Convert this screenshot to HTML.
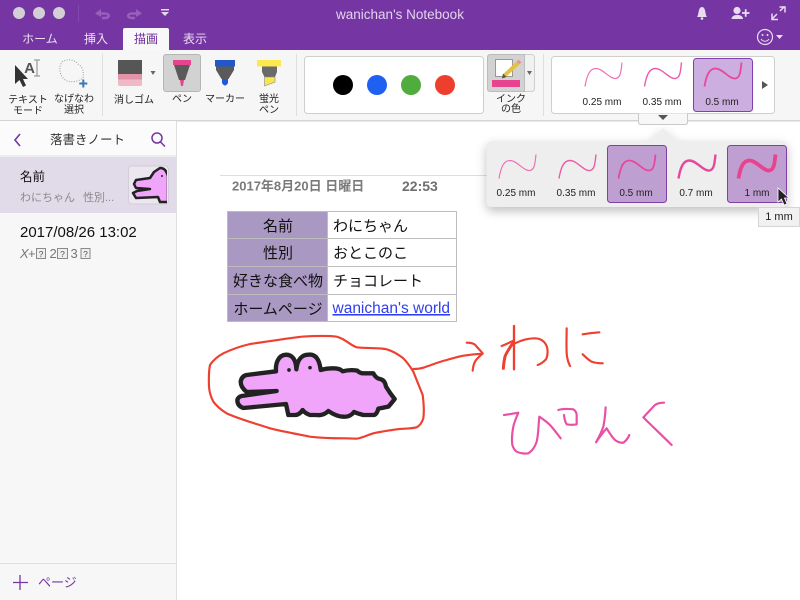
<!DOCTYPE html>
<html lang="ja">
<head>
<meta charset="utf-8">
<title>wanichan's Notebook</title>
<style>
html,body{margin:0;padding:0;width:800px;height:600px;overflow:hidden;background:#fff}
svg{display:block;position:absolute;left:0;top:0}
text{font-family:"Liberation Sans","Noto Sans CJK JP",sans-serif}
.c{text-anchor:middle}
.l{font-size:10px;fill:#222;text-anchor:middle}
.mm{font-size:10px;fill:#222;text-anchor:middle}
.tab{font-size:12px;fill:#eadff2;text-anchor:middle}
.cell{font-size:15px;fill:#111}
.ink{fill:none;stroke-linecap:round;stroke-linejoin:round}
</style>
</head>
<body>
<svg width="800" height="600" viewBox="0 0 800 600" xmlns="http://www.w3.org/2000/svg">
<defs>
<clipPath id="thumb"><rect x="128" y="166" width="39" height="38"/></clipPath>
<filter id="sh" x="-10%" y="-20%" width="120%" height="160%"><feDropShadow dx="0" dy="4" stdDeviation="5" flood-color="#000" flood-opacity=".25"/></filter>
<path id="cv" d="M0 24C2 12 5 6 11 6C18 6 25 17 31 16C36 15 36 8 37 0"/>
</defs>

<!-- Title bar -->
<rect width="800" height="50" fill="#7535a2"/>
<circle cx="19" cy="13" r="6" fill="#d2d0d4"/><circle cx="39" cy="13" r="6" fill="#d2d0d4"/><circle cx="59" cy="13" r="6" fill="#d2d0d4"/>
<rect x="78" y="5" width="1" height="17" fill="#8449ad"/>
<path d="M99 13.500H105C110 13.500 110 18 105 18H102" fill="none" stroke="#955fbb" stroke-width="2.600"/><path d="M95 13.500L101 9V17Z" fill="#955fbb"/>
<path d="M138 13.500H132C127 13.500 127 18 132 18H135" fill="none" stroke="#955fbb" stroke-width="2.600"/><path d="M142 13.500L136 9V17Z" fill="#955fbb"/>
<rect x="161" y="9" width="8" height="1.500" fill="#e5d9ee"/><path d="M161 12H169L165 16Z" fill="#e5d9ee"/>
<text x="400" y="19" class="c" font-size="13.500" fill="#e3d4ee">wanichan's Notebook</text>
<!-- right icons -->
<path d="M697 17C699 15 698 7 702 7C706 7 705 15 707 17Z" fill="#e8dcf0"/><circle cx="702" cy="18.500" r="1.300" fill="#e8dcf0"/>
<circle cx="737" cy="10.500" r="3.600" fill="#e8dcf0"/><path d="M731.500 19C731.500 13.500 743 13.500 743 19Z" fill="#e8dcf0"/><path d="M742 13H749.500M745.700 9.300V16.700" stroke="#e8dcf0" stroke-width="1.800" fill="none"/>
<path d="M772.500 18.500L777 14M780 11L784.500 6.500M779.500 7H785V12.500M772 13.500V19.500H778" stroke="#e8dcf0" stroke-width="1.500" fill="none"/>
<circle cx="765" cy="37" r="7.500" fill="none" stroke="#e8dcf0" stroke-width="1.200"/><circle cx="762.500" cy="35" r="1" fill="#e8dcf0"/><circle cx="767.500" cy="35" r="1" fill="#e8dcf0"/><path d="M761 39C763 42 767 42 769 39" fill="none" stroke="#e8dcf0"/>
<path d="M776 35H783L779.500 39Z" fill="#e8dcf0"/>
<!-- Tabs -->
<path d="M123 50V30Q123 28 125 28H167Q169 28 169 30V50Z" fill="#f8f8f8"/>
<text x="40" y="43" class="tab">ホーム</text>
<text x="96" y="43" class="tab">挿入</text>
<text x="146" y="43" class="c" font-size="12" fill="#6d2c99">描画</text>
<text x="195" y="43" class="tab">表示</text>

<!-- Ribbon -->
<rect y="50" width="800" height="70" fill="#f6f6f6"/>
<rect y="120" width="800" height="1.500" fill="#d4d4d4"/>
<rect x="102" y="54" width="1" height="62" fill="#dfdfdf"/>
<rect x="296" y="54" width="1" height="62" fill="#dfdfdf"/>
<rect x="543" y="54" width="1" height="62" fill="#dfdfdf"/>

<!-- text mode -->
<path d="M15 65V84L19.500 80L23 87L26 85.500L23 79H28Z" fill="#333"/>
<text x="29.500" y="73" class="c" font-size="15" font-weight="bold" fill="#555">A</text>
<path d="M34 60H40M34 76H40M37 60V76" stroke="#888" fill="none"/>
<text x="28" y="103" class="l">テキスト</text><text x="28" y="114" class="l">モード</text>
<!-- lasso -->
<path d="M62 62C68 58 75 60 78 64C83 67 84 72 83 78C78 82 68 84 63 78C59 73 59 66 62 62Z" fill="none" stroke="#9a9a9a" stroke-dasharray="1 1.500"/>
<path d="M83.300 79.500V87.500M79.300 83.500H87.300" stroke="#3b78b8" stroke-width="2" fill="none"/>
<text x="74" y="102" class="l">なげなわ</text><text x="74" y="113" class="l">選択</text>
<!-- eraser -->
<rect x="118" y="60" width="24" height="14" fill="#565656"/><rect x="118" y="74" width="24" height="5.500" fill="#e393a8"/><path d="M118 79.500H142V84Q142 86 140 86H120Q118 86 118 84Z" fill="#f1b9c7"/>
<path d="M150.500 71H155.500L153 75Z" fill="#666"/>
<text x="134" y="103" class="l">消しゴム</text>
<!-- pen -->
<rect x="163.500" y="54.500" width="37" height="37" rx="2.500" fill="#d2d2d2" stroke="#b5b5b5"/>
<rect x="173" y="60" width="18" height="5" fill="#e8438f"/><path d="M174 65H190L185 80H179Z" fill="#5a5a5a"/><path d="M180 80H184L183 86H181Z" fill="#e8438f"/>
<text x="182" y="102" class="l">ペン</text>
<!-- marker -->
<rect x="215" y="60" width="20" height="6.500" fill="#2257c9"/><path d="M216 66.500H234V70L228.500 79H221.500L216 70Z" fill="#5a5a5a"/><path d="M222 79H228V83Q225 88 222 83Z" fill="#2257e0"/>
<text x="225" y="102" class="l">マーカー</text>
<!-- highlighter -->
<rect x="257" y="60" width="24" height="6.500" fill="#fbe94f"/><path d="M262 66.500H277V72L275 77H264.500L262 72Z" fill="#6a6a6a"/><path d="M264.500 77H275V82L264.500 86Z" fill="#f8e64a" stroke="#888" stroke-width=".6"/>
<text x="269" y="102" class="l">蛍光</text><text x="269" y="113" class="l">ペン</text>

<!-- palette -->
<rect x="304.500" y="56.500" width="179" height="57" rx="3" fill="#fff" stroke="#cfcfcf"/>
<circle cx="343" cy="85" r="10" fill="#000"/><circle cx="377" cy="85" r="10" fill="#1f60f3"/><circle cx="411" cy="85" r="10" fill="#50ac3c"/><circle cx="445" cy="85" r="10" fill="#ee3e2e"/>
<!-- ink colour -->
<rect x="487.500" y="54.500" width="47" height="37" rx="3" fill="#f1f1f1" stroke="#cecece"/>
<path d="M524.500 54.500H490.500Q487.500 54.500 487.500 57.500V88.500Q487.500 91.500 490.500 91.500H524.500Z" fill="#d2d2d2" stroke="#bcbcbc"/>
<rect x="495.500" y="59.500" width="17" height="17" fill="#fff" stroke="#999"/>
<path d="M504 76L518 63" stroke="#e5c13f" stroke-width="4" fill="none"/><path d="M518 63L520 61" stroke="#e78ea5" stroke-width="4" fill="none"/><path d="M502 78.500L503 73.500L506.500 77Z" fill="#555"/>
<rect x="492" y="80" width="28" height="7" fill="#e8438f"/>
<path d="M527 71H532L529.500 75Z" fill="#666"/>
<text x="511" y="102" class="l">インク</text><text x="511" y="112" class="l">の色</text>

<!-- top gallery -->
<rect x="551.500" y="56.500" width="223" height="57" rx="3" fill="#fff" stroke="#cfcfcf"/>
<rect x="693.500" y="58.500" width="59" height="53" rx="3" fill="#cdaee0" stroke="#8340ac"/>
<use href="#cv" x="585" y="62.500" fill="none" stroke="#ed72b5" stroke-width="1.200"/>
<use href="#cv" x="644.500" y="62.500" fill="none" stroke="#ea5ca8" stroke-width="1.400"/>
<use href="#cv" x="704.500" y="62.500" fill="none" stroke="#e8489c" stroke-width="1.800"/>
<text x="602" y="105" class="mm">0.25 mm</text><text x="662" y="105" class="mm">0.35 mm</text><text x="722" y="105" class="mm">0.5 mm</text>
<path d="M762 81L768 85L762 89Z" fill="#555"/>
<path d="M638.500 113.500V122Q638.500 124.500 641 124.500H685Q687.500 124.500 687.500 122V113.500" fill="#f7f7f7" stroke="#c9c9c9"/>
<path d="M658 115H668L663 120Z" fill="#555"/>

<!-- Sidebar -->
<rect y="121" width="176" height="479" fill="#f7f7f7"/>
<rect y="121" width="176" height="36" fill="#fbfbfb"/>
<rect x="176" y="121" width="1" height="479" fill="#dedede"/>
<rect y="155" width="176" height="2" fill="#ececec"/>
<rect y="157" width="176" height="56" fill="#e1dbe9"/>
<path d="M20 134L15 140L20 146" fill="none" stroke="#7535a2" stroke-width="1.600"/>
<text x="87.500" y="144" class="c" font-size="12.500" fill="#333">落書きノート</text>
<circle cx="157" cy="138" r="5" fill="none" stroke="#7535a2" stroke-width="1.500"/><path d="M160.500 142L165 146.500" stroke="#7535a2" stroke-width="1.500"/>
<text x="20" y="181" font-size="12.500" fill="#111">名前</text>
<text x="20" y="201" font-size="11" fill="#8a8a8a">わにちゃん</text><text x="83" y="201" font-size="11" fill="#8a8a8a">性別...</text>
<rect x="128.500" y="166" width="40" height="38" rx="3" fill="#ebe6ef" stroke="#d2cdd6"/>
<g clip-path="url(#thumb)">
<path d="M136 180L150 178L154 172L160 168C164 168 166 170 168 176V202H160L158 197L136 198L133 193L137 191L150 189L136 188L134 184Z" fill="#f0a4fa" stroke="#222" stroke-width="2.500" stroke-linejoin="round"/>
<circle cx="162" cy="176" r="1" fill="#222"/>
</g>
<text x="20" y="237" font-size="15" fill="#111">2017/08/26 13:02</text>
<text x="20" y="258" font-size="13" font-style="italic" fill="#777">X</text><text x="28" y="258" font-size="13" fill="#777">+</text>
<rect x="36.500" y="248.500" width="9" height="10" fill="#eee" stroke="#8a8a8a"/><text x="41" y="257" class="c" font-size="8.500" fill="#555">?</text>
<text x="49.500" y="258" font-size="13" fill="#777">2</text>
<rect x="57.500" y="248.500" width="10" height="10" fill="#eee" stroke="#8a8a8a"/><text x="62.500" y="257" class="c" font-size="8.500" fill="#555">?</text>
<text x="70.500" y="258" font-size="13" fill="#777">3</text>
<rect x="81" y="248.500" width="9" height="10" fill="#eee" stroke="#8a8a8a"/><text x="85.500" y="257" class="c" font-size="8.500" fill="#555">?</text>
<rect y="563" width="176" height="1" fill="#dedede"/>
<path d="M20 575V590M13 582.500H28" stroke="#7535a2" stroke-width="1.300"/>
<text x="38" y="587" font-size="13" fill="#7535a2">ページ</text>

<!-- Note header -->
<rect x="220" y="175" width="280" height="1" fill="#dddddd"/>
<text x="232" y="190.500" font-size="13" font-weight="bold" fill="#7a7a7a">2017年8月20日 日曜日</text>
<text x="402" y="191" font-size="14" font-weight="bold" fill="#6e6e6e">22:53</text>

<!-- Table -->
<rect x="227.500" y="211.500" width="229" height="110" fill="#fff" stroke="#bdbdbd"/>
<rect x="228" y="212" width="99" height="109" fill="#a998c2"/>
<path d="M227 238.500H457M227 266.500H457M227 294.500H457M327.500 211V322" stroke="#bdbdbd" fill="none"/>
<text x="278" y="231" class="c cell">名前</text>
<text x="278" y="258" class="c cell">性別</text>
<text x="278" y="286" class="c cell">好きな食べ物</text>
<text x="278" y="314" class="c cell">ホームページ</text>
<text x="333" y="231" class="cell">わにちゃん</text>
<text x="333" y="258" class="cell">おとこのこ</text>
<text x="333" y="286" class="cell">チョコレート</text>
<text x="332.500" y="313" font-size="15.500" fill="#2f3ff0" text-decoration="underline">wanichan's world</text>

<!-- Drawing: circle & croc -->
<g transform="translate(200 330) scale(.33333)">
<path class="ink" stroke="#ee4030" stroke-width="6.500" d="M305 20C340 18 380 16 410 20C435 26 450 45 470 52C505 56 535 52 560 58C585 65 600 78 610 85C625 100 632 112 640 125C650 150 660 175 668 195C672 225 672 250 670 265C665 280 658 288 650 292C630 297 610 295 590 298C565 302 540 305 520 310C500 316 485 324 470 326L435 325C400 325 365 324 330 320C290 312 250 305 210 295C165 280 120 268 80 250C60 238 50 228 40 215C32 200 28 185 27 170C26 145 26 125 30 105C40 90 55 78 70 70C95 58 125 48 150 42C200 35 255 26 305 20Z"/>
<path fill="#f0a4fa" stroke="#222" stroke-width="13" stroke-linejoin="round" d="M228 124C226 100 235 75 258 74C278 74 288 90 289 118C292 90 305 74 325 74C345 72 358 85 362 120Q380 115 400 115Q420 115 428 124Q450 118 472 122Q480 130 490 130L520 130Q528 145 540 147Q555 150 558 170Q570 190 584 207Q570 225 565 230L535 236Q530 255 520 255L490 255Q470 250 462 246Q450 262 430 260Q410 260 385 243Q370 258 350 255L330 255Q315 250 308 240Q298 255 285 255L265 255L258 222L130 234Q112 228 112 210Q115 200 125 198L230 183L140 186Q122 172 122 155Q125 138 140 135Z"/>
<circle cx="267" cy="120" r="5.500" fill="#222"/><circle cx="330" cy="113" r="5.500" fill="#222"/>
</g>
<g transform="translate(410 320) scale(.33333)">
<g class="ink" stroke="#ee4030">
<path stroke-width="6.500" d="M10 147C20 147 30 146 40 143C65 135 85 126 110 120C130 114 150 109 160 107C180 104 200 102 218 101M170 68C180 68 190 70 195 74L218 100C208 110 198 118 195 125C191 132 189 142 188 152"/>
<path stroke-width="7" d="M312 18V148"/>
<path stroke-width="6.500" d="M275 78C290 72 300 67 310 62"/>
<path stroke-width="9" d="M308 70C296 88 288 100 285 110C282 122 281 133 280 145"/>
<path stroke-width="6.500" d="M315 70C335 60 355 55 375 55C395 55 408 68 412 85C414 100 412 110 408 118C400 126 392 132 383 135"/>
<path stroke-width="6.500" d="M470 25C470 55 468 85 471 110C473 122 476 130 480 138M518 43C535 40 550 38 568 37M518 103C528 112 535 120 545 125C555 129 566 130 578 130"/>
</g>
<g class="ink" stroke="#e94fa5" stroke-width="6.500">
<path d="M282 285C298 283 312 280 325 278C318 295 312 308 310 320C306 340 305 360 307 375C310 385 315 392 320 395C330 400 345 402 355 400C368 392 375 380 380 365C386 340 385 315 388 290C398 297 410 305 420 315C432 328 442 342 452 355"/>
<path d="M445 270C455 267 470 266 490 268C497 272 500 280 500 285V313C490 315 480 315 470 313C465 305 463 295 462 285"/>
<path d="M587 262C586 280 584 300 580 320C573 340 565 355 558 367C568 352 578 338 590 325C598 338 605 350 615 360C623 366 632 369 640 368C649 362 654 354 658 345"/>
<path d="M762 248C752 248 742 250 735 255C722 268 710 282 700 292C728 320 758 348 785 375"/>
</g>
</g>

<!-- Popup -->
<path filter="url(#sh)" d="M492.500 141H650L663 128L677 141H781Q787 141 787 147V201Q787 207 781 207H492.500Q486.500 207 486.500 201V147Q486.500 141 492.500 141Z" fill="#eeeeee"/>
<rect x="607.500" y="145.500" width="59" height="57" rx="3" fill="#bf9fd2" stroke="#7f3fa8"/>
<rect x="727.500" y="145.500" width="59" height="57" rx="3" fill="#bf9fd2" stroke="#7f3fa8"/>
<use href="#cv" x="499" y="154.500" fill="none" stroke="#ed72b5" stroke-width="1.200"/>
<use href="#cv" x="559" y="154.500" fill="none" stroke="#ea5ca8" stroke-width="1.400"/>
<use href="#cv" x="618.500" y="154.500" fill="none" stroke="#e8489c" stroke-width="1.800"/>
<use href="#cv" x="678.500" y="154.500" fill="none" stroke="#e8489c" stroke-width="2.400"/>
<use href="#cv" x="738.500" y="154.500" fill="none" stroke="#e8438f" stroke-width="3.800"/>
<text x="516" y="196" class="mm">0.25 mm</text><text x="576" y="196" class="mm">0.35 mm</text><text x="636" y="196" class="mm">0.5 mm</text><text x="696" y="196" class="mm">0.7 mm</text><text x="757" y="196" class="mm">1 mm</text>
<!-- cursor -->
<path d="M778 188V202L781.500 199L784 205L787 204L784.500 198H789Z" fill="#222" stroke="#fff" stroke-width=".8"/>
<!-- tooltip -->
<rect x="758.500" y="207.500" width="41" height="19" fill="#f1f1f1" stroke="#d5d5d5"/>
<text x="779" y="220" class="c" font-size="11" fill="#222">1 mm</text>
</svg>
</body>
</html>
